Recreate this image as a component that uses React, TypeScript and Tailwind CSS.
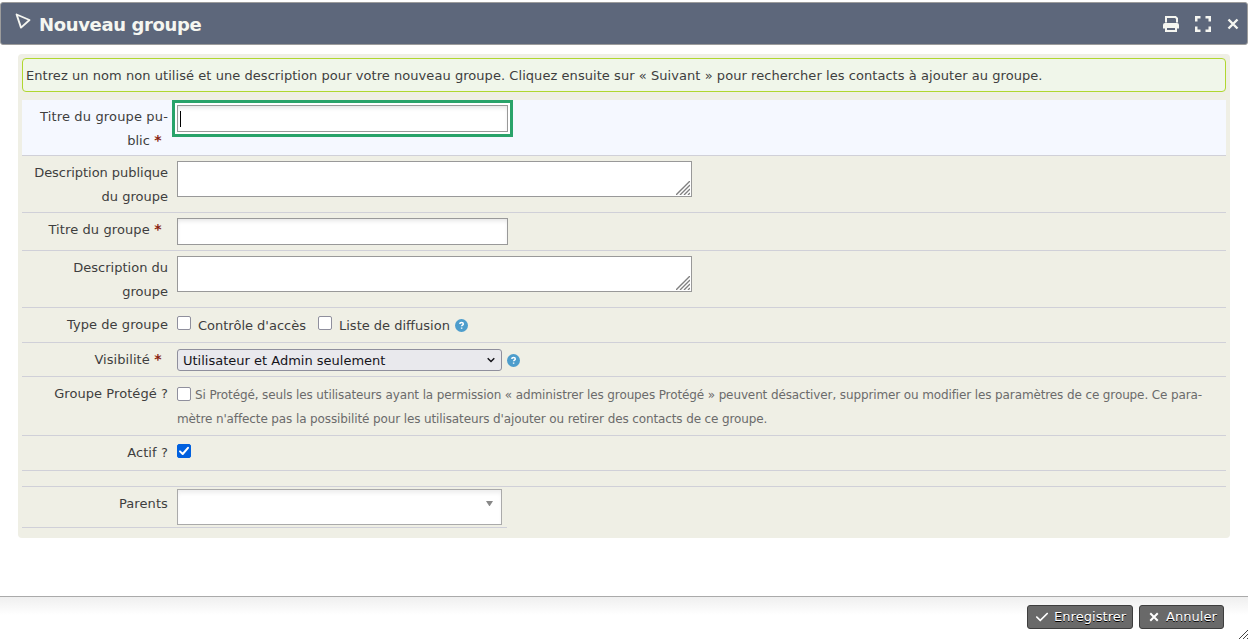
import type { ReactNode } from "react";
import { FaCheck } from "react-icons/fa6";

const Required = () => <span className="mr-[6px] inline-block w-[8px] text-center text-[14px] leading-none font-bold text-[#8a1f11]">*</span>;

const Cross = ({ className = "" }: { className?: string }) => (
  <svg className={`shrink-0 ${className}`} viewBox="0 0 12 12">
    <path d="M1.5 1.5l9 9M10.5 1.5l-9 9" fill="none" stroke="currentColor" strokeWidth="2.4" />
  </svg>
);

const Help = ({ className = "" }: { className?: string }) => (
  <svg className={`h-[13px] w-[13px] shrink-0 ${className}`} viewBox="0 0 13 13">
    <circle cx="6.5" cy="6.5" r="6.5" fill="#4d9dcc" />
    <path d="M4.8 4.9c0-2 3.5-2 3.5 0 0 1.2-1.7 1.1-1.7 2.4M6.6 8.5v1.3" fill="none" stroke="#fff" strokeWidth="1.5" />
  </svg>
);

const Grip = () => (
  <svg className="absolute bottom-[1px] right-[1px] h-[14px] w-[14px]" viewBox="0 0 14 14">
    <path d="M0 14L14 0M4 14L14 4M8 14l6-6M12 14l2-2" fill="none" stroke="#808080" strokeWidth="1.4" />
  </svg>
);

const Check = ({ checked = false, className = "" }: { checked?: boolean; className?: string }) => (
  <span
    role="checkbox"
    aria-checked={checked}
    className={`block h-[14px] w-[14px] shrink-0 rounded-[2px] border ${checked ? "border-[#0060df] bg-[#0060df]" : "border-[#8f8f9d] bg-white"} ${className}`}
  >
    {checked && (
      <svg className="block h-3 w-3" viewBox="0 0 12 12">
        <path d="M2 6.4l2.7 2.6L10 2.8" fill="none" stroke="#fff" strokeWidth="2" strokeLinecap="round" strokeLinejoin="round" />
      </svg>
    )}
  </span>
);

const Row = ({ label, className, children }: { label: ReactNode; className: string; children: ReactNode }) => (
  <div className={`flex gap-[9px] border-b border-[#d0d0d8] pt-[5px] ${className}`}>
    <div className="w-[146px] shrink-0 whitespace-nowrap text-right leading-6">{label}</div>
    {children}
  </div>
);

const inputStyle = "h-[27px] w-[331px] border border-[#999] bg-white shadow-[inset_0_3px_4px_-1px_#e6e6e6]";

export default function App() {
  return (
    <div className="flex h-[639px] w-[1248px] flex-col overflow-hidden bg-white pt-[2px] font-['DejaVu_Sans',sans-serif] text-[13px] text-[#3e3e3e]">
      <header className="flex h-[43px] shrink-0 items-center rounded-[3px] border border-[#9c9c9c] bg-[#5d677b] pl-[14px] pr-[8px] text-[#f5f6f1]">
        <svg className="-mt-[5px] h-[16px] w-[16px]" viewBox="0 0 16 16">
          <path d="M1.6 1.5L14.5 7 6 14.6z" fill="none" stroke="currentColor" strokeWidth="1.9" strokeLinejoin="round" />
        </svg>
        <h1 className="ml-[8px] mt-[2px] whitespace-nowrap text-[18px] font-bold tracking-[-0.36px]">Nouveau groupe</h1>
        <div className="ml-auto flex items-center">
          <svg className="h-4 w-4" viewBox="0 0 16 16">
            <path d="M3 6.5V1h9.5l1.5 1.500V6.500" fill="none" stroke="currentColor" strokeWidth="2" />
            <path d="M2 7h12a2 2 0 0 1 2 2v3.500h-2V16H2v-3.500H0V9a2 2 0 0 1 2-2zM4 12v2h8v-2z" fill="currentColor" fillRule="evenodd" />
          </svg>
          <svg className="ml-[16px] h-4 w-4" viewBox="0 0 16 16">
            <path d="M1.250 5.500V1.250H5.500M10.500 1.250h4.250V5.500M14.750 10.500v4.250H10.500M5.500 14.750H1.250V10.500" fill="none" stroke="currentColor" strokeWidth="2.5" />
          </svg>
          <Cross className="ml-[16px] h-[12px] w-[12px]" />
        </div>
      </header>

      <main className="ml-[18px] mt-[9px] h-[484px] w-[1212px] shrink-0 rounded-[4px] bg-[#efefe5] px-[4px] pt-[4px]">
        <div className="flex h-[34px] items-center whitespace-nowrap rounded-[4px] border border-[#b0d730] bg-[#f0f6ea] pl-[3px] pt-px tracking-[0.055px]">
          Entrez un nom non utilisé et une description pour votre nouveau groupe. Cliquez ensuite sur « Suivant » pour rechercher les contacts à ajouter au groupe.
        </div>
        <div className="mt-[8px]">
          <Row className="h-[56px] bg-[#f5f8ff]" label={<><span className="tracking-[0.15px]">Titre du groupe pu-</span><br />blic <Required /></>}>
            <div className="-ml-[5px] -mt-[5px] h-[37px] w-[341px] border-[3px] border-[#29a36a] bg-white p-[2px]">
              <div className={`${inputStyle} pl-[2px] pt-[5px]`}>
                <div className="h-4 w-px bg-black" />
              </div>
            </div>
          </Row>
          <Row className="h-[57px]" label={<><span className="tracking-[-0.04px]">Description publique</span><br />du groupe</>}>
            <div className="relative h-[36px] w-[515px] border border-[#999] bg-white"><Grip /></div>
          </Row>
          <Row className="h-[38px]" label={<><span className="tracking-[0.1px]">Titre du groupe </span><Required /></>}>
            <div className={inputStyle} />
          </Row>
          <Row className="h-[57px]" label={<>Description du<br />groupe</>}>
            <div className="relative h-[36px] w-[515px] border border-[#999] bg-white"><Grip /></div>
          </Row>
          <Row className="h-[35px]" label={<span className="tracking-[0.07px]">Type de groupe</span>}>
            <div className="flex h-6 whitespace-nowrap leading-[25px]">
              <Check className="mt-[3px]" />
              <span className="ml-[7px] w-[120px]">Contrôle d'accès</span>
              <Check className="mt-[3px]" />
              <span className="ml-[7px] w-[116px]">Liste de diffusion</span>
              <Help className="mt-[6px]" />
            </div>
          </Row>
          <Row className="h-[34px]" label={<><span className="tracking-[0.06px]">Visibilité </span><Required /></>}>
            <div className="flex h-[24px]">
              <div className="mt-px flex h-[22px] w-[325px] items-center justify-between rounded-[3px] border border-[#8f8f9d] bg-[#e9e9ed] pl-[5px] pr-[6px] pt-px text-[#15141a]">
                Utilisateur et Admin seulement
                <svg className="-mt-[2px] h-2 w-2" viewBox="0 0 8 8"><path d="M.7 2.2L4 5.5l3.3-3.3" fill="none" stroke="currentColor" strokeWidth="1.5" /></svg>
              </div>
              <Help className="ml-[5px] mt-[6px]" />
            </div>
          </Row>
          <Row className="h-[59px]" label={<span className="tracking-[0.07px]">Groupe Protégé ?</span>}>
            <div className="whitespace-nowrap text-[12px] tracking-[-0.118px] text-[#6b6b6b]">
              <div className="flex h-6 leading-[26px]">
                <Check className="mr-[4px] mt-[5px]" />
                Si Protégé, seuls les utilisateurs ayant la permission « administrer les groupes Protégé » peuvent désactiver, supprimer ou modifier les paramètres de ce groupe. Ce para-
              </div>
              <div className="leading-[26px]">mètre n'affecte pas la possibilité pour les utilisateurs d'ajouter ou retirer des contacts de ce groupe.</div>
            </div>
          </Row>
          <Row className="h-[35px]" label={<span className="tracking-[0.1px]">Actif ?</span>}>
            <Check checked className="mt-[3px]" />
          </Row>
          <div className="h-[16px] border-b border-[#d0d0d8]" />
          <Row className="h-[41px] w-[485px]" label={<span className="tracking-[0.1px]">Parents</span>}>
            <div className="-mt-[3px] flex h-[36px] w-[325px] items-center justify-end border border-[#aaa] bg-white pr-[8px] shadow-[inset_0_4px_4px_-1px_#eee]">
              <svg className="-mt-[7px] h-[5px] w-[7px]" viewBox="0 0 7 5"><path d="M0 0h7L3.500 5.500z" fill="#888" /></svg>
            </div>
          </Row>
        </div>
      </main>

      <footer className="relative mt-auto flex h-[43px] shrink-0 justify-end gap-[6px] border-t border-[#aaa] bg-linear-to-b from-[#efefef] to-white to-[18px] pr-[24px] pt-[8px] text-white">
        <button className="flex h-[24px] w-[106px] items-center whitespace-nowrap rounded-[3px] border border-[#3e3e3e] bg-[#696969] pl-[7px] tracking-[0.05px] [text-shadow:0_1px_0_black]">
          <FaCheck className="mr-[5px] h-[14px] w-[14px] shrink-0" />Enregistrer
        </button>
        <button className="flex h-[24px] w-[85px] items-center whitespace-nowrap rounded-[3px] border border-[#3e3e3e] bg-[#696969] pl-[9px] tracking-[0.05px] [text-shadow:0_1px_0_black]">
          <Cross className="mr-[7px] h-[10px] w-[10px]" />Annuler
        </button>
        <svg className="absolute bottom-0 right-0 h-[9px] w-[9px]" viewBox="0 0 9 9">
          <path d="M0 9L9 0M4 9l5-5M8 9l1-1" stroke="#444" strokeWidth="1" fill="none" />
        </svg>
      </footer>
    </div>
  );
}
